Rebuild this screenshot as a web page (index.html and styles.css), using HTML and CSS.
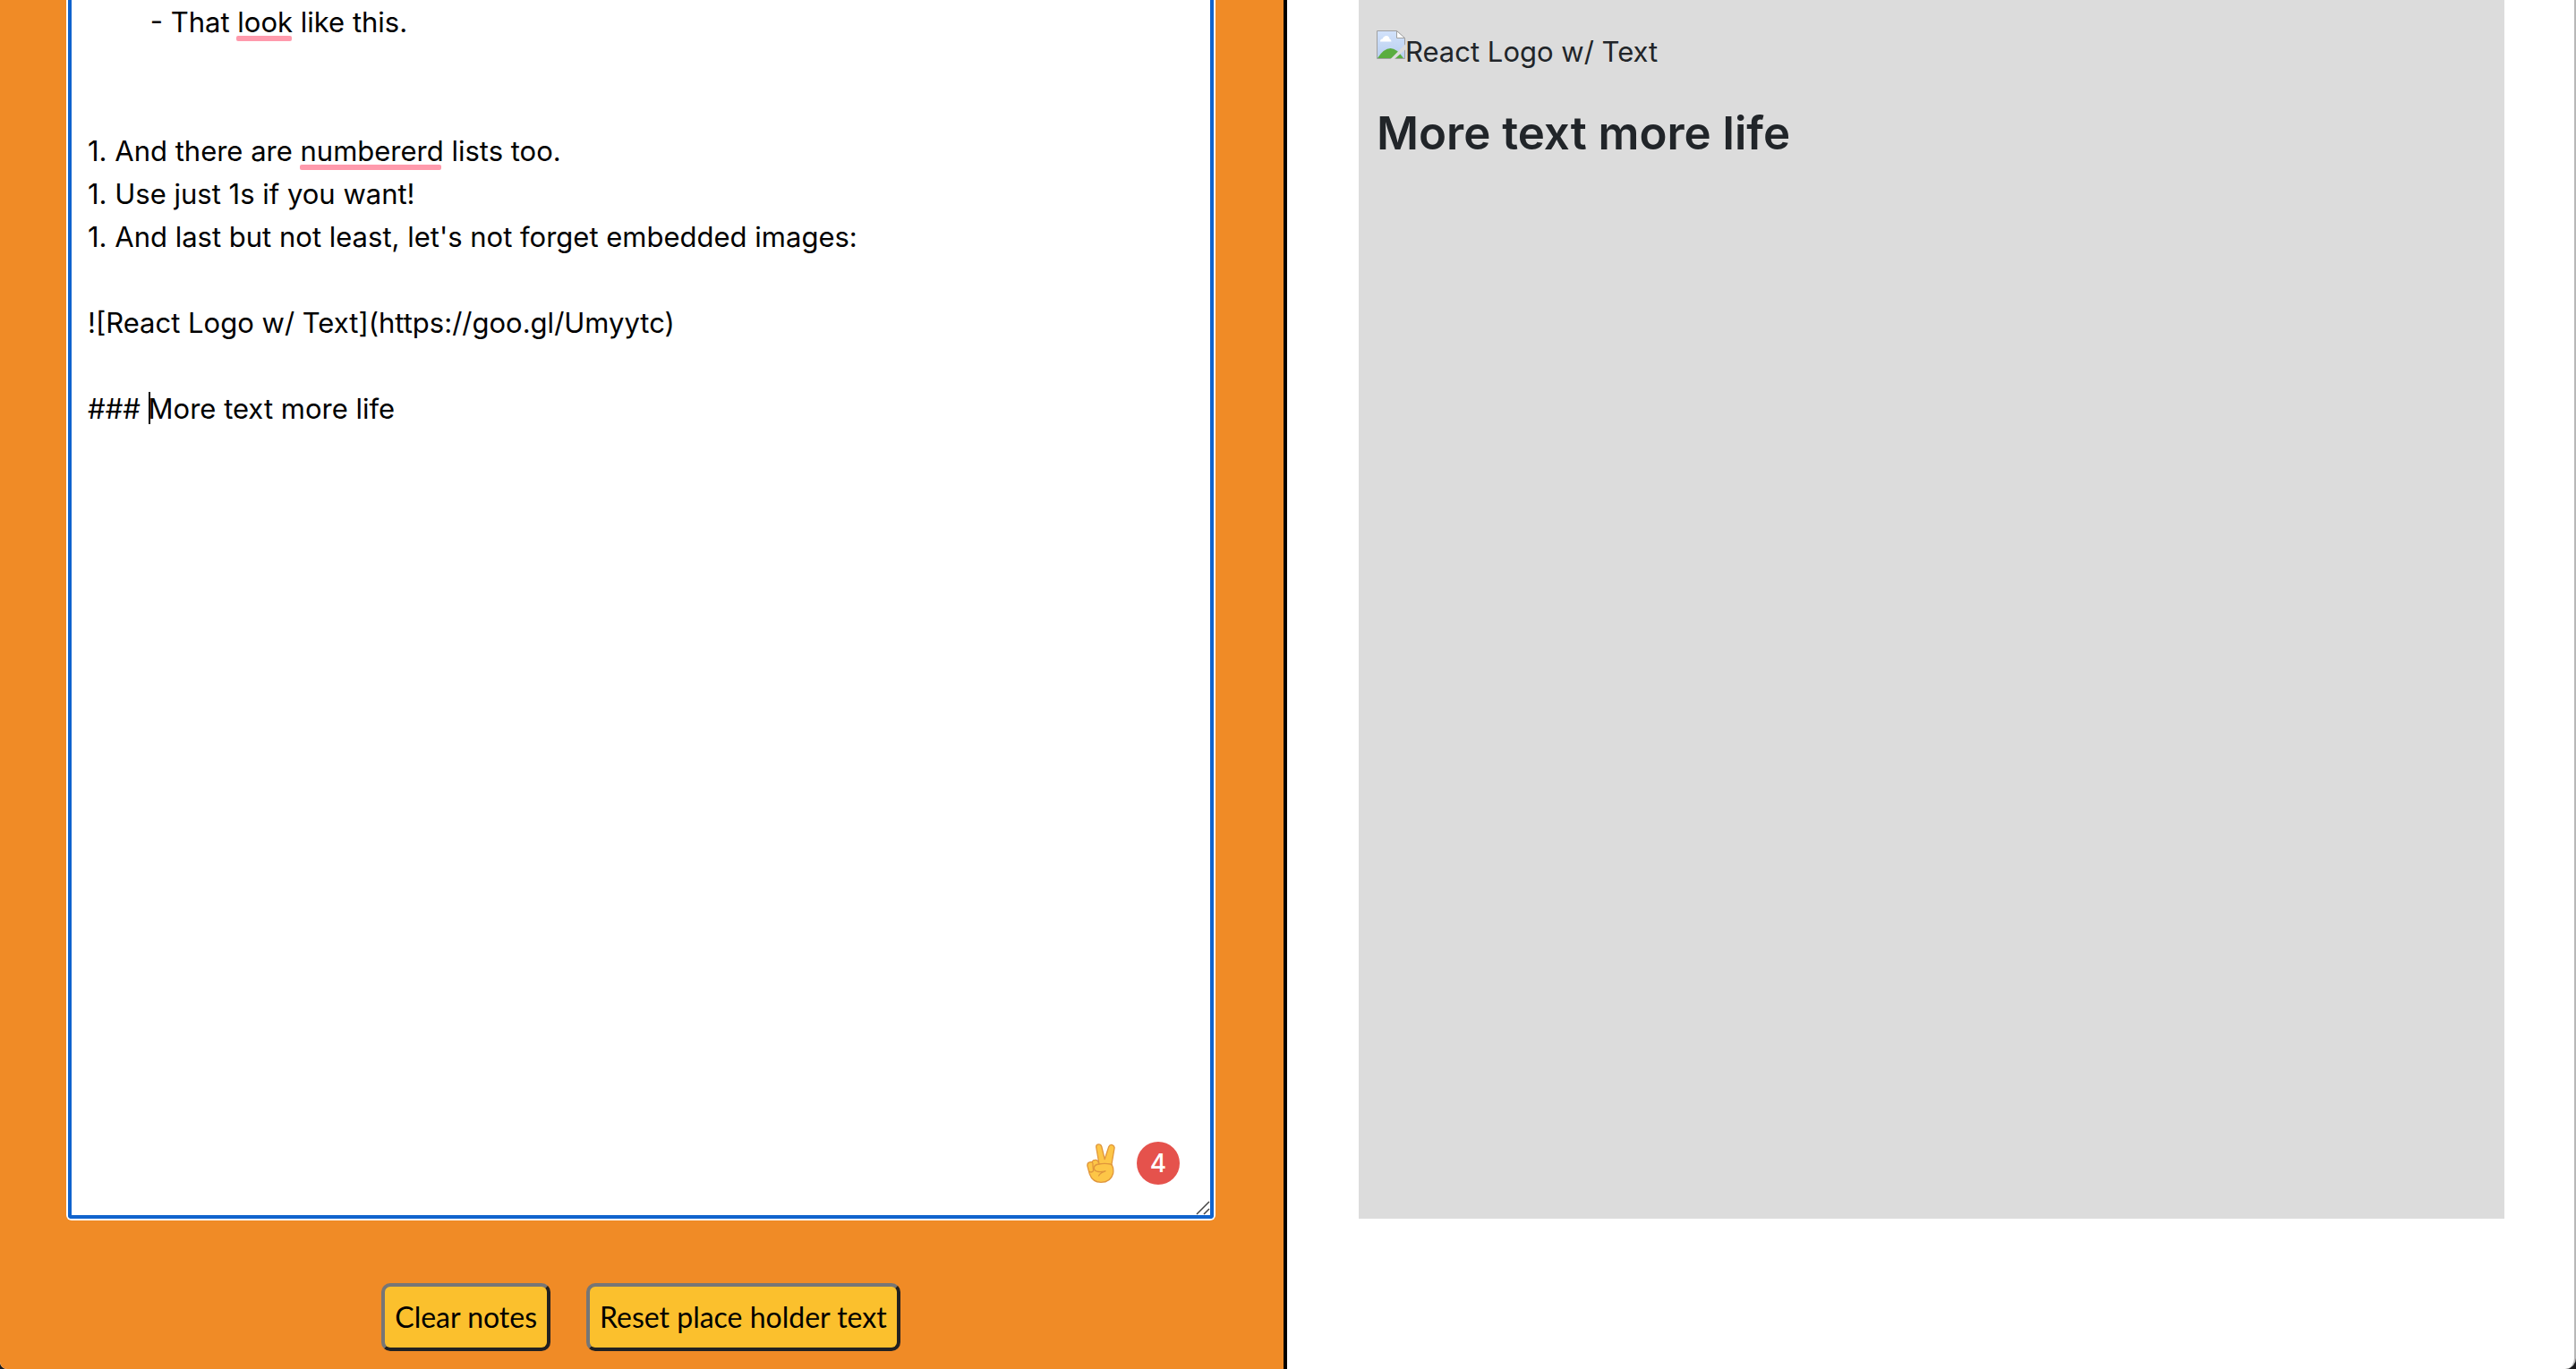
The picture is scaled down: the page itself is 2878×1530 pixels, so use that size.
FILE: index.html
```html
<!DOCTYPE html>
<html lang="en">
<head>
<meta charset="utf-8">
<title>Markdown Notes</title>
<link rel="stylesheet" href="styles.css">
</head>
<body>
<main class="app">
  <section class="panel panel-editor">
    <div class="editor">
      <textarea class="notes" rows="28" aria-label="Notes" spellcheck="false">        - That look like this.


1. And there are numbererd lists too.
1. Use just 1s if you want!
1. And last but not least, let's not forget embedded images:

![React Logo w/ Text](https://goo.gl/Umyytc)

### More text more life</textarea>
      <span class="spell spell-look"></span>
      <span class="spell spell-numbered"></span>
      <span class="caret"></span>
      <div class="checker">
        <svg class="hand" viewBox="0 0 32 44" aria-hidden="true">
          <g fill="#fdc647" stroke="#e0963c" stroke-width="1.3" stroke-linejoin="round" stroke-linecap="round">
            <path d="M14 23 L10.700 4 Q10.500 1 13.500 0.900 Q16 0.800 16.800 3.500 L20.200 17.500 L24.700 3.700 Q25.800 0.900 28.600 1.600 Q31.600 2.600 31 5.500 L28 23 Q30.600 28 29.600 33.500 Q27 43.300 16 43.300 Q6.500 43.300 3.300 34 L0.900 25 Q0.500 21.500 3.500 20.800 L6 20.500 Q7.500 18 10.500 18.400 Q13 19 13.600 22 Z"/>
            <path d="M6 20.600 Q7.500 22 7 25 L7.600 30.500 Q5.500 33 2.800 31.300" fill="none"/>
            <path d="M13.700 23 Q8.500 23.500 8.300 27.500 Q8.600 31 13 31.500 Q17 32 21 30.800 Q15.500 32.500 13.500 36 M13.700 23 Q20 21.800 26.500 23 L28 24" fill="none"/>
          </g>
        </svg>
        <span class="count">4</span>
      </div>
      <svg class="grip" viewBox="0 0 16 16" aria-hidden="true">
        <path d="M1 15 L15 1 M9 15 L15 9" fill="none" stroke="#444" stroke-width="1.500"/>
      </svg>
    </div>
    <div class="actions">
      <button class="action" type="button">Clear notes</button>
      <button class="action" type="button">Reset place holder text</button>
    </div>
  </section>
  <section class="panel panel-preview">
    <article class="preview">
      <p class="picture">
        <svg class="broken" viewBox="0 0 32 32" aria-hidden="true">
          <defs><linearGradient id="sky" x1="0" y1="0" x2="0" y2="1"><stop offset="0" stop-color="#d2e2fb"/><stop offset="1" stop-color="#b8ceef"/></linearGradient></defs>
          <path d="M0.500 0.500 H22.500 L31.500 9 V31.500 H0.500 Z" fill="url(#sky)" stroke="#a0a0a0"/>
          <path d="M4 12.500 Q4 9.500 6.500 9.500 Q8 6 11 6 Q14 6 14.500 9.500 Q16.500 10 16.500 12.500 Z" fill="#fff"/>
          <path d="M1 31 Q8 20 15.500 20 Q22.500 20 30 31 Z" fill="#5aad3f"/>
          <path d="M22.500 0.500 V8.500 H31.500 Z" fill="#fff" stroke="#a0a0a0"/>
          <path d="M32 15.500 L15.500 32 H20 L32 21.500 Z" fill="#dcdcdc"/>
        </svg><span>React Logo w/ Text</span>
      </p>
      <h3 class="title">More text more life</h3>
    </article>
  </section>
</main>
</body>
</html>
```
FILE: styles.css
```css
* {
  box-sizing: border-box;
}

html {
  background: #1c1c1e;
}

body {
  margin: 0;
  font-family: Inter, "Liberation Sans", sans-serif;
  font-size: 31px;
  line-height: 48px;
  color: #212529;
}

.app {
  display: grid;
  grid-template-columns: 1fr 1fr;
  grid-template-rows: auto 1fr;
  min-height: 100vh;
  background: #fff;
  border-right: 2px solid #b8b8b8;
  border-radius: 0 0 12px 8px;
  overflow: hidden;
}

.panel {
  display: grid;
  grid-row: span 2;
  grid-template-rows: subgrid;
}

.panel-editor {
  padding: 0 78px 0 76px;
  background: #f08b26;
  border-right: 4px solid #000;
}

.panel-preview {
  padding: 0 78px 0 80px;
}

.editor {
  position: relative;
}

.notes {
  display: block;
  width: 100%;
  margin: 0;
  padding: 1px 18px 13px;
  border: 4px solid #1063cd;
  border-top: 0;
  border-radius: 0 0 4px 4px;
  outline: 0;
  box-shadow: 0 0 0 2px #fff;
  background: #fff;
  color: #000;
  font: inherit;
  resize: none;
  overflow: hidden;
}

.spell {
  position: absolute;
  height: 6px;
  border-radius: 2px;
  background: #ff9aac;
}

.spell-look {
  top: 40px;
  left: 188px;
  width: 62px;
}

.spell-numbered {
  top: 184px;
  left: 259px;
  width: 158px;
}

.caret {
  position: absolute;
  top: 438px;
  left: 90px;
  width: 2px;
  height: 36px;
  background: #000;
}

.checker {
  position: absolute;
  right: 38px;
  bottom: 38px;
  display: flex;
  align-items: center;
  gap: 24px;
}

.hand {
  width: 32px;
  height: 44px;
}

.count {
  width: 48px;
  height: 48px;
  border-radius: 50%;
  background: #e5524c;
  color: #fff;
  font-size: 28px;
  font-weight: 500;
  text-align: center;
}

.grip {
  position: absolute;
  right: 4px;
  bottom: 4px;
  width: 16px;
  height: 16px;
}

.actions {
  display: flex;
  align-items: flex-start;
  justify-content: center;
  gap: 40px;
  padding: 72px 0 20px;
}

.action {
  height: 76px;
  padding: 0 11px;
  border: 4px solid;
  border-color: #767676 #212121 #212121 #767676;
  border-radius: 10px;
  background: #fbc02d;
  color: #000;
  font: 32px/48px Lato, sans-serif;
}

.preview {
  padding: 34px 20px;
  background: #dcdcdc;
}

.picture {
  display: flex;
  margin: 0 0 32px;
}

.broken {
  width: 32px;
  height: 32px;
}

.title {
  margin: 0;
  font-size: 51px;
  font-weight: 600;
  line-height: 70px;
}
```
